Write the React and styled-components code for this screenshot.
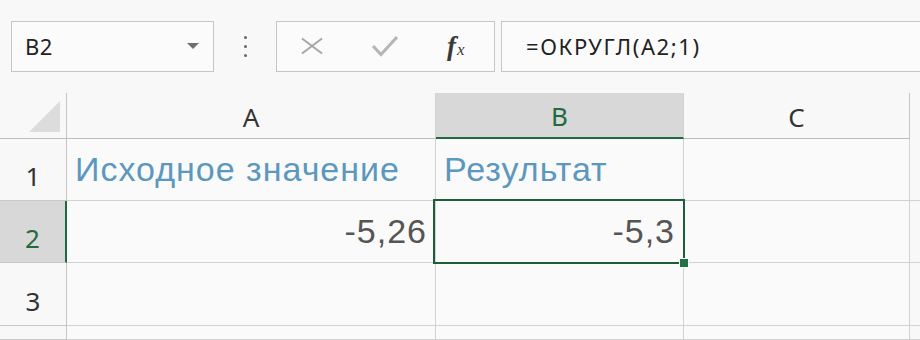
import React from 'react';
import styled, { createGlobalStyle } from 'styled-components';

const GlobalStyle = createGlobalStyle`
  html, body {
    margin: 0;
    padding: 0;
    background: #f8f8f8;
    overflow: hidden;
  }
`

const Page = styled.div`
  width: 920px;
  height: 340px;
  background: #f8f8f8;
  font-family: "Noto Sans", "Open Sans", sans-serif;
  color: #333;
`

const FormulaBar = styled.div`
  display: flex;
  align-items: center;
  height: 92px;
  padding-left: 11px;
  box-sizing: border-box;
`

const Box = styled.div`
  height: 51px;
  box-sizing: border-box;
  border: 1px solid #c6c6c6;
  background: #fbfbfb;
  display: flex;
  align-items: center;
`

const NameBox = styled(Box)`
  width: 203px;
  padding: 0 14px 0 13px;
  justify-content: space-between;
  font-size: 22px;
  letter-spacing: 0.5px;
  color: #222;
`

const Caret = styled.span`
  width: 0;
  height: 0;
  border-left: 6px solid transparent;
  border-right: 6px solid transparent;
  border-top: 6px solid #707070;
`

const Dots = styled.div`
  width: 62px;
  display: flex;
  flex-direction: column;
  align-items: center;
  gap: 6px;

  span {
    width: 3px;
    height: 3px;
    border-radius: 50%;
    background: #666;
  }
`

const ButtonGroup = styled(Box)`
  width: 219px;
  padding-left: 23px;
  gap: 47px;
`

const Fx = styled.span`
  font-family: "Liberation Serif", serif;
  font-style: italic;
  font-weight: bold;
  font-size: 27px;
  color: #3a3a3a;
  margin-left: 1px;

  small {
    font-size: 17px;
    font-weight: normal;
    margin-left: 1px;
  }
`

const FormulaInput = styled(Box)`
  flex: 1;
  margin-left: 6px;
  border-right: none;
  padding-left: 24px;
  font-size: 22px;
  letter-spacing: 1.6px;
  color: #222;
`

const Sheet = styled.div`
  display: grid;
  grid-template-columns: 67px 369px 248px 226px 10px;
  grid-template-rows: 47px 62px 62px 63px 14px;
`

const Cell = styled.div`
  position: relative;
  box-sizing: border-box;
  border-right: 1px solid #d2d2d2;
  border-bottom: 1px solid #d2d2d2;
  display: flex;
  align-items: center;
  padding: 0 8px 0 8px;
  justify-content: ${p => (p.$right ? 'flex-end' : 'flex-start')};
  font-family: "Liberation Sans", Arial, sans-serif;
  font-size: 34px;
  letter-spacing: 1px;
  color: ${p => (p.$title ? '#5c98bd' : '#555')};
  background: #fafafa;
`

const ColHeader = styled.div`
  box-sizing: border-box;
  margin-top: 1px;
  border-right: 1px solid ${p => (p.$last ? '#c4c4c4' : '#d2d2d2')};
  border-bottom: ${p => (p.$active ? '2px solid #1e6b41' : '1px solid #bdbdbd')};
  background: ${p => (p.$active ? '#d8d8d8' : '#f8f8f8')};
  color: ${p => (p.$active ? '#1f6a3f' : '#333')};
  display: flex;
  align-items: center;
  justify-content: center;
  font-size: 26px;
  padding-top: 2px;
`

const Corner = styled.div`
  box-sizing: border-box;
  border-right: 1px solid #c4c4c4;
  border-bottom: 1px solid #bdbdbd;
  margin-top: 1px;
  display: flex;
  align-items: flex-end;
  justify-content: flex-end;
  padding: 0 6px 6px 0;

  &::after {
    content: '';
    width: 0;
    height: 0;
    border-left: 31px solid transparent;
    border-bottom: 31px solid #dcdcdc;
  }
`

const RowHeader = styled.div`
  box-sizing: border-box;
  border-right: ${p => (p.$active ? '2px solid #1e6b41' : '1px solid #c4c4c4')};
  border-bottom: 1px solid #c8c8c8;
  background: ${p => (p.$active ? '#d8d8d8' : '#f8f8f8')};
  color: ${p => (p.$active ? '#1f6a3f' : '#333')};
  display: flex;
  align-items: flex-end;
  justify-content: center;
  padding-bottom: 6px;
  font-size: 26px;
`

const Edge = styled.div`
  background: #f8f8f8;
  border-bottom: 1px solid #d2d2d2;
`

const Selection = styled.div`
  position: absolute;
  z-index: 2;
  left: -3px;
  top: -2px;
  right: -2px;
  bottom: -2px;
  border: 2px solid #1b5e38;
  pointer-events: none;

  &::after {
    content: '';
    position: absolute;
    right: -6px;
    bottom: -6px;
    width: 8px;
    height: 8px;
    background: #217346;
    border: 1px solid #fafafa;
  }
`

const columns = ['A', 'B', 'C'];
const rows = [
  { n: 1, cells: [{ text: 'Исходное значение', title: true }, { text: 'Результат', title: true }, {}] },
  { n: 2, cells: [{ text: '-5,26', right: true }, { text: '-5,3', right: true, selected: true }, {}] },
  { n: 3, cells: [{}, {}, {}] },
  { n: '', cells: [{}, {}, {}] },
];

function App() {
  return (
    <Page>
      <GlobalStyle />
      <FormulaBar>
        <NameBox>
          B2
          <Caret />
        </NameBox>
        <Dots><span /><span /><span /></Dots>
        <ButtonGroup>
          <svg width="24" height="18" viewBox="0 0 24 18">
            <path d="M2 1.5 L22 16.5 M22 1.5 L2 16.5" stroke="#a6a6a6" strokeWidth="2" fill="none" />
          </svg>
          <svg width="28" height="22" viewBox="0 0 28 22">
            <path d="M2 11 L10 19.5 L26 2" stroke="#b6b6b6" strokeWidth="3.2" fill="none" />
          </svg>
          <Fx>f<small>x</small></Fx>
        </ButtonGroup>
        <FormulaInput>=ОКРУГЛ(A2;1)</FormulaInput>
      </FormulaBar>
      <Sheet>
        <Corner />
        {columns.map((c, i) => (
          <ColHeader key={c} $active={c === 'B'} $last={i === columns.length - 1}>{c}</ColHeader>
        ))}
        <div />
        {rows.map((r) => (
          <React.Fragment key={`row-${r.n}`}>
            <RowHeader $active={r.n === 2}>{r.n}</RowHeader>
            {r.cells.map((cell, i) => (
              <Cell key={i} $title={cell.title} $right={cell.right}>
                {cell.text}
                {cell.selected && <Selection />}
              </Cell>
            ))}
            <Edge />
          </React.Fragment>
        ))}
      </Sheet>
    </Page>
  );
}

export default App;
